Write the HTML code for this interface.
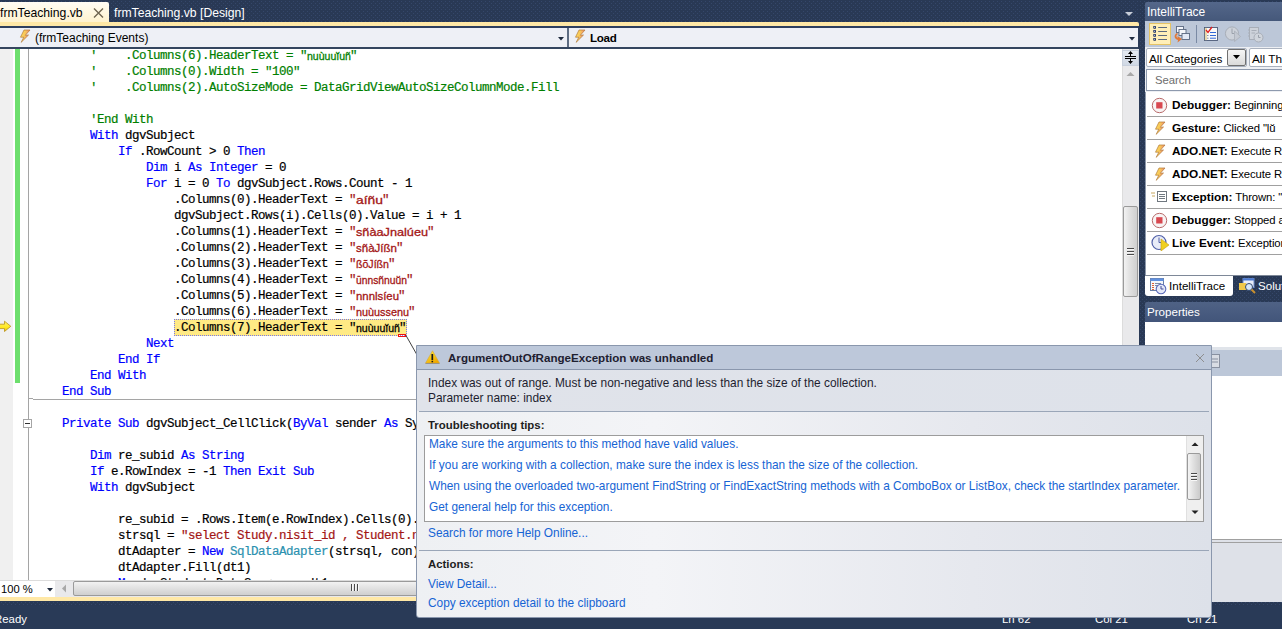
<!DOCTYPE html>
<html><head><meta charset="utf-8">
<style>
*{box-sizing:border-box}
html,body{margin:0;padding:0}
body{width:1282px;height:629px;overflow:hidden;position:relative;background:#2B3B58;font-family:"Liberation Sans",sans-serif;font-size:12px;color:#000}
.a{position:absolute}
.navy{background-color:#293955;background-image:radial-gradient(circle at 1.5px 1.5px,#35476A 0.6px,transparent 1px),radial-gradient(circle at 3.5px 3.5px,#35476A 0.6px,transparent 1px);background-size:4px 4px}
.t{position:absolute;white-space:nowrap;line-height:16px}
#code{position:absolute;left:34px;top:48px;width:1088px;height:532px;overflow:hidden}
.ln{position:absolute;left:0;height:16px;line-height:16px;white-space:pre;font-family:"Liberation Mono",monospace;font-size:12.5px;letter-spacing:-0.5px;color:#000;-webkit-text-stroke:0.2px currentColor}
.k{color:#0000FF}.c{color:#008000}.s{color:#A31515}.ty{color:#2B91AF}
.th{display:inline-block;overflow:visible;white-space:nowrap;font-family:"Liberation Sans",sans-serif;font-size:11.5px;vertical-align:top;letter-spacing:0;-webkit-text-stroke:0.3px currentColor}
</style></head><body>
<svg width="0" height="0" style="position:absolute"><defs><linearGradient id="bg" x1="0" y1="0" x2="1" y2="0.3"><stop offset="0" stop-color="#FFE060"/><stop offset="0.5" stop-color="#F8C858"/><stop offset="1" stop-color="#F07878"/></linearGradient></defs></svg>
<!-- top tab strip -->
<div class="a navy" style="left:0;top:0;width:1145px;height:22px"></div>
<div class="a" style="left:0;top:2px;width:109px;height:20px;background:linear-gradient(#FFFCF4,#FFF3CF);border-top-right-radius:2px"></div>
<div class="t" style="left:0;top:5px;font-size:12.2px;color:#000">frmTeaching.vb</div>
<svg class="a" style="left:93px;top:8px" width="11" height="10" viewBox="0 0 11 10"><path d="M1 0.5 L10 9.5 M10 0.5 L1 9.5" stroke="#6F6550" stroke-width="1.4"/></svg>
<div class="t" style="left:114px;top:5px;font-size:12.2px;color:#fff">frmTeaching.vb [Design]</div>
<svg class="a" style="left:1125px;top:12px" width="9" height="5"><path d="M0 0 H8 L4 4 Z" fill="#C8CED8"/></svg>
<div class="a" style="left:0;top:22px;width:1139px;height:4px;background:#FFE8A6;border-top-right-radius:2px"></div>
<div class="a" style="left:0;top:26px;width:1138px;height:2px;background:#2E3F5E"></div>
<!-- nav bar -->
<div class="a" style="left:0;top:28px;width:1138px;height:19px;background:#EEF0F6"></div>
<div class="a" style="left:0;top:47px;width:1138px;height:2px;background:#34455F"></div>
<div class="a" style="left:567px;top:28px;width:2px;height:19px;background:#5D6C82"></div>
<svg class="a" style="left:19px;top:29px" width="12" height="14" viewBox="0 0 12 14"><path d="M5 1 L11 1 L6.3 6.3 L9.5 6 L2.2 13.3 L4.8 8.2 L1.5 8.2 Z" fill="url(#bg)" stroke="#B07838" stroke-width="0.7"/></svg>
<div class="t" style="left:35px;top:30px;font-size:12px">(frmTeaching Events)</div>
<svg class="a" style="left:558px;top:37px" width="7" height="4"><path d="M0 0 H6 L3 3.5 Z" fill="#1F2B3F"/></svg>
<svg class="a" style="left:574px;top:29px" width="12" height="14" viewBox="0 0 12 14"><path d="M5 1 L11 1 L6.3 6.3 L9.5 6 L2.2 13.3 L4.8 8.2 L1.5 8.2 Z" fill="url(#bg)" stroke="#B07838" stroke-width="0.7"/></svg>
<div class="t" style="left:590px;top:30px;font-size:11.6px;font-weight:bold;letter-spacing:-0.3px">Load</div>
<svg class="a" style="left:1129px;top:37px" width="7" height="4"><path d="M0 0 H6 L3 3.5 Z" fill="#1F2B3F"/></svg>
<!-- editor -->
<div class="a" style="left:0;top:49px;width:1122px;height:531px;background:#fff"></div>
<div class="a" style="left:0;top:49px;width:13px;height:531px;background:#F0F0F0"></div>
<div class="a" style="left:15px;top:49px;width:5px;height:334px;background:#6DDF6D"></div>
<div class="a" style="left:28px;top:49px;width:1px;height:531px;background:#A5A5A5"></div>
<div class="a" style="left:29px;top:398px;width:4px;height:1px;background:#A5A5A5"></div>
<div class="a" style="left:33px;top:399px;width:1089px;height:1px;background:#A5A5A5"></div>
<div class="a" style="left:23px;top:419px;width:9px;height:9px;border:1px solid #A5A5A5;background:#fff"></div>
<div class="a" style="left:25px;top:423px;width:5px;height:1px;background:#333"></div>
<div class="a" style="left:174px;top:319px;width:233px;height:17px;background:#FFEA84;border:1px dotted #7878F0"></div>
<div class="a" style="left:398px;top:334px;width:8px;height:3px;background:#F01010"></div>
<div class="a" style="left:399px;top:335px;width:6px;height:1px;background-image:linear-gradient(90deg,#fff 50%,#9090F0 50%);background-size:2px 1px"></div>
<svg class="a" style="left:0;top:320px" width="12" height="13" viewBox="0 0 12 13"><defs><linearGradient id="ag" x1="0" y1="0" x2="0" y2="1"><stop offset="0" stop-color="#FFF26A"/><stop offset="0.6" stop-color="#FFE820"/><stop offset="1" stop-color="#E8C010"/></linearGradient></defs><path d="M-1 4.2 H4.5 V1.2 L10.8 6.3 L4.5 11.5 V8.6 H-1 Z" fill="url(#ag)" stroke="#B89018" stroke-width="0.8"/></svg>
<div id="code">
<div class="ln" style="top:0px">        <span class="c">&#x27;    .Columns(6).HeaderText = &quot;</span><span class="th" style="width:43px;color:#008000"><span style="display:inline-block;transform:scaleX(0.917);transform-origin:0 0">nuùuuĭuñ</span></span><span class="c">&quot;</span></div>
<div class="ln" style="top:16px">        <span class="c">&#x27;    .Columns(0).Width = &quot;100&quot;</span></div>
<div class="ln" style="top:32px">        <span class="c">&#x27;    .Columns(2).AutoSizeMode = DataGridViewAutoSizeColumnMode.Fill</span></div>
<div class="ln" style="top:64px">        <span class="c">&#x27;End With</span></div>
<div class="ln" style="top:80px">        <span class="k">With</span> dgvSubject</div>
<div class="ln" style="top:96px">            <span class="k">If</span> .RowCount &gt; 0 <span class="k">Then</span></div>
<div class="ln" style="top:112px">                <span class="k">Dim</span> i <span class="k">As</span> <span class="k">Integer</span> = 0</div>
<div class="ln" style="top:128px">                <span class="k">For</span> i = 0 <span class="k">To</span> dgvSubject.Rows.Count - 1</div>
<div class="ln" style="top:144px">                    .Columns(0).HeaderText = <span class="s">&quot;</span><span class="th" style="width:26px;color:#A31515"><span style="display:inline-block;transform:scaleX(1.206);transform-origin:0 0">aíñu</span></span><span class="s">&quot;</span></div>
<div class="ln" style="top:160px">                    dgvSubject.Rows(i).Cells(0).Value = i + 1</div>
<div class="ln" style="top:176px">                    .Columns(1).HeaderText = <span class="s">&quot;</span><span class="th" style="width:71px;color:#A31515"><span style="display:inline-block;transform:scaleX(1.104);transform-origin:0 0">sñàaJnalúeu</span></span><span class="s">&quot;</span></div>
<div class="ln" style="top:192px">                    .Columns(2).HeaderText = <span class="s">&quot;</span><span class="th" style="width:40px;color:#A31515"><span style="display:inline-block;transform:scaleX(1.002);transform-origin:0 0">sñàJíßn</span></span><span class="s">&quot;</span></div>
<div class="ln" style="top:208px">                    .Columns(3).HeaderText = <span class="s">&quot;</span><span class="th" style="width:32px;color:#A31515"><span style="display:inline-block;transform:scaleX(0.922);transform-origin:0 0">ßõJíßn</span></span><span class="s">&quot;</span></div>
<div class="ln" style="top:224px">                    .Columns(4).HeaderText = <span class="s">&quot;</span><span class="th" style="width:50px;color:#A31515"><span style="display:inline-block;transform:scaleX(0.896);transform-origin:0 0">ūnnsñnuŭn</span></span><span class="s">&quot;</span></div>
<div class="ln" style="top:240px">                    .Columns(5).HeaderText = <span class="s">&quot;</span><span class="th" style="width:42px;color:#A31515"><span style="display:inline-block;transform:scaleX(0.989);transform-origin:0 0">nnnlsíeu</span></span><span class="s">&quot;</span></div>
<div class="ln" style="top:256px">                    .Columns(6).HeaderText = <span class="s">&quot;</span><span class="th" style="width:52px;color:#A31515"><span style="display:inline-block;transform:scaleX(0.942);transform-origin:0 0">nuùussenu</span></span><span class="s">&quot;</span></div>
<div class="ln" style="top:272px">                    .Columns(7).HeaderText = &quot;<span class="th" style="width:43px;color:#000"><span style="display:inline-block;transform:scaleX(0.917);transform-origin:0 0">nuùuuĭuñ</span></span>&quot;</div>
<div class="ln" style="top:288px">                <span class="k">Next</span></div>
<div class="ln" style="top:304px">            <span class="k">End If</span></div>
<div class="ln" style="top:320px">        <span class="k">End With</span></div>
<div class="ln" style="top:336px">    <span class="k">End Sub</span></div>
<div class="ln" style="top:368px">    <span class="k">Private Sub</span> dgvSubject_CellClick(<span class="k">ByVal</span> sender <span class="k">As</span> System.Object, <span class="k">ByVal</span> e <span class="k">As</span> System.Windows.Forms.DataGridViewCellEventArgs)</div>
<div class="ln" style="top:400px">        <span class="k">Dim</span> re_subid <span class="k">As</span> <span class="k">String</span></div>
<div class="ln" style="top:416px">        <span class="k">If</span> e.RowIndex = -1 <span class="k">Then Exit Sub</span></div>
<div class="ln" style="top:432px">        <span class="k">With</span> dgvSubject</div>
<div class="ln" style="top:464px">            re_subid = .Rows.Item(e.RowIndex).Cells(0).Value</div>
<div class="ln" style="top:480px">            strsql = <span class="s">&quot;select Study.nisit_id , Student.nisit_name from Study&quot;</span></div>
<div class="ln" style="top:496px">            dtAdapter = <span class="k">New</span> <span class="ty">SqlDataAdapter</span>(strsql, con)</div>
<div class="ln" style="top:512px">            dtAdapter.Fill(dt1)</div>
<div class="ln" style="top:528px">            <span class="k">Me</span>.dgvStudent.DataSource = dt1</div>
</div>

<!-- code highlight (current statement) -->
<!--HL-->
<!-- vertical scrollbar -->
<div class="a" style="left:1122px;top:49px;width:17px;height:531px;background:#E9E9EB;border-left:1px solid #DCDCDC"></div>
<div class="a" style="left:1122px;top:50px;width:17px;height:16px;background:linear-gradient(#E4E9F0,#D0D8E4);border:1px solid #C8D0DC"></div>
<svg class="a" style="left:1123px;top:50px" width="16" height="16" viewBox="0 0 16 16"><path d="M2 6.5 H13 M2 8.5 H13" stroke="#000" stroke-width="1"/><path d="M7.5 1 L5 4 H10 Z M7.5 14 L5 11 H10 Z" fill="#000"/><path d="M7.5 4 V6 M7.5 9 V11" stroke="#000" stroke-width="1"/></svg>
<svg class="a" style="left:1126px;top:71px" width="9" height="6"><path d="M0.5 5 L4.5 1 L8.5 5 Z" fill="#A8A8A8"/></svg>
<div class="a" style="left:1123px;top:206px;width:15px;height:91px;border:1px solid #9A9A9A;border-radius:2px;background:linear-gradient(90deg,#F2F2F2,#E2E2E2 40%,#CFCFCF)"></div>
<div class="a" style="left:1127px;top:248px;width:7px;height:1px;background:#4A4A4A;box-shadow:0 1px 0 #F8F8F8,0 3px 0 #4A4A4A,0 4px 0 #F8F8F8,0 6px 0 #4A4A4A,0 7px 0 #F8F8F8"></div>
<!-- horizontal scrollbar row -->
<div class="a" style="left:0;top:580px;width:1122px;height:17px;background:#E9E9EB;border-top:1px solid #DCDCDC"></div>
<div class="a" style="left:0;top:581px;width:55px;height:16px;background:#fff"></div>
<div class="t" style="left:1px;top:581px;font-size:11.2px">100 %</div>
<svg class="a" style="left:47px;top:588px" width="7" height="4"><path d="M0 0 H6 L3 3.5 Z" fill="#1F2B3F"/></svg>
<svg class="a" style="left:61px;top:584px" width="6" height="9"><path d="M5 0.5 L1 4.5 L5 8.5 Z" fill="#A8A8A8"/></svg>
<div class="a" style="left:73px;top:581px;width:1049px;height:15px;border:1px solid #9A9A9A;border-radius:2px;background:linear-gradient(#F2F2F2,#E2E2E2 45%,#CFCFCF)"></div>
<div class="a" style="left:351px;top:584px;width:1px;height:7px;background:#4A4A4A;box-shadow:1px 0 0 #F8F8F8,3px 0 0 #4A4A4A,4px 0 0 #F8F8F8,6px 0 0 #4A4A4A,7px 0 0 #F8F8F8"></div>
<div class="a" style="left:0;top:597px;width:1139px;height:4px;background:#FFE8A6"></div>
<!-- status bar -->
<div class="a navy" style="left:0;top:601px;width:1282px;height:28px"></div>
<div class="a" style="left:0;top:606px;width:1282px;height:23px;background:#293A57"></div>
<div class="t" style="left:-6px;top:611px;font-size:11.4px;color:#fff">Ready</div>
<div class="t" style="left:1002px;top:611px;font-size:11.4px;color:#fff">Ln 62</div>
<div class="t" style="left:1095px;top:611px;font-size:11.4px;color:#fff">Col 21</div>
<div class="t" style="left:1187px;top:611px;font-size:11.4px;color:#fff">Ch 21</div>
<!-- right panel -->
<div class="a navy" style="left:1139px;top:0;width:143px;height:601px"></div>
<div class="a" style="left:1145px;top:2px;width:137px;height:19px;background:linear-gradient(#54678A,#45587A);border-radius:2px 0 0 0"></div>
<div class="t" style="left:1147px;top:4px;font-size:12px;color:#fff">IntelliTrace</div>
<div class="a" style="left:1145px;top:21px;width:137px;height:26px;background:#BCC7D8"></div>
<div class="a" style="left:1149px;top:23px;width:22px;height:22px;background:#FFEFB8;border:1px solid #E5C365"></div>
<svg class="a" style="left:1150px;top:24px" width="20" height="20" viewBox="0 0 20 20"><g fill="#1E3060"><rect x="3.3" y="2" width="2.7" height="2.7" rx="0.6"/><rect x="3.3" y="6" width="2.7" height="2.7" rx="0.6"/><rect x="3.3" y="10" width="2.7" height="2.7" rx="0.6"/><rect x="3.3" y="14" width="2.7" height="2.7" rx="0.6"/></g><g fill="#D8E4F4"><rect x="4.1" y="2.8" width="1" height="1"/><rect x="4.1" y="6.8" width="1" height="1"/><rect x="4.1" y="10.8" width="1" height="1"/><rect x="4.1" y="14.8" width="1" height="1"/></g><path d="M8.2 3.5 H17 M8.2 7.5 H17 M8.2 11.5 H17 M8.2 15.5 H17" stroke="#4A5A78" stroke-width="0.9"/></svg>
<svg class="a" style="left:1173px;top:24px" width="18" height="20" viewBox="0 0 18 20"><rect x="3.5" y="2.5" width="7" height="6" fill="#F4F6FA" stroke="#5A6880" stroke-width="0.9"/><rect x="6" y="5.5" width="7" height="6" fill="#F4F6FA" stroke="#5A6880" stroke-width="0.9"/><rect x="9" y="9.5" width="7.5" height="6" fill="#E4EAF6" stroke="#5A6880" stroke-width="0.9"/><path d="M4 9 C0.5 11 1 15 5 16 L4.5 18.5 L9 15 L4.5 12 L4.8 14 C2.8 13 3 11 5 10 Z" fill="#E07838"/></svg>
<div class="a" style="left:1196px;top:25px;width:1px;height:18px;background:#7A8AA4"></div>
<svg class="a" style="left:1203px;top:26px" width="16" height="16" viewBox="0 0 16 16"><rect x="1.5" y="1.5" width="13" height="13" fill="#F8F8F8" stroke="#4A5A78" stroke-width="0.9"/><rect x="1.9" y="1.9" width="2" height="12.2" fill="#E8D8A8"/><path d="M3 4 L5 6.5 L9 1" stroke="#E02020" stroke-width="1.3" fill="none"/><path d="M7 6.5 H13 M7 9.5 H13 M7 12.2 H13" stroke="#3068D8" stroke-width="1"/><path d="M4 9.5 H5.5 M4 12.2 H5.5" stroke="#8A96B0" stroke-width="1"/></svg>
<svg class="a" style="left:1224px;top:25px" width="18" height="18" viewBox="0 0 18 18"><circle cx="8" cy="8.5" r="6.6" fill="#CDD2DA" stroke="#A8AEB8" stroke-width="1"/><path d="M8 3.5 V8.5 H10" stroke="#9AA0AA" fill="none"/><path d="M10.5 6 L16.5 11.5 L10.5 16.5 Z" fill="#C4C9D2" stroke="#A8AEB8" stroke-width="0.8"/></svg>
<svg class="a" style="left:1247px;top:26px" width="17" height="17" viewBox="0 0 17 17"><rect x="2.5" y="1.5" width="9" height="12" fill="#CDD2DA" stroke="#A8AEB8"/><path d="M1 4 H3 M1 7 H3 M1 10 H3" stroke="#A8AEB8"/><path d="M4.5 4.5 H9.5 M4.5 7 H8" stroke="#A8AEB8"/><circle cx="11.5" cy="11.5" r="4.5" fill="#D0D5DC" stroke="#A8AEB8"/><path d="M11.5 9 V11.5 H13.5" stroke="#9AA0AA" fill="none"/></svg>
<div class="a" style="left:1145px;top:47px;width:137px;height:45px;background:#EDEFF3"></div>
<div class="a" style="left:1146px;top:48px;width:101px;height:19px;background:#fff;border:1px solid #A9B1BE;border-radius:2px"></div>
<div class="t" style="left:1149px;top:51px;font-size:11.8px">All Categories</div>
<div class="a" style="left:1227px;top:49px;width:19px;height:17px;background:linear-gradient(#F6F6F6,#DADADA);border:1px solid #707070;border-radius:2px"></div>
<svg class="a" style="left:1233px;top:55px" width="8" height="5"><path d="M0 0 H7 L3.5 4 Z" fill="#000"/></svg>
<div class="a" style="left:1249px;top:48px;width:40px;height:19px;background:#fff;border:1px solid #A9B1BE;border-radius:2px"></div>
<div class="t" style="left:1252px;top:51px;font-size:11.8px">All Th</div>
<div class="a" style="left:1146px;top:69px;width:140px;height:22px;background:#fff;border:1px solid #8E9AAE"></div>
<div class="t" style="left:1155px;top:72px;font-size:11.3px;color:#6D6D6D">Search</div>
<div class="a" style="left:1145px;top:92px;width:137px;height:183px;background:#fff"></div>
<svg class="a" style="left:1151px;top:97px" width="17" height="17" viewBox="0 0 17 17"><circle cx="8.5" cy="8.5" r="7.2" fill="#F8F4F4" stroke="#B86A6A" stroke-width="1"/><rect x="5.2" y="5.2" width="6.3" height="6.3" fill="#D84850"/></svg>
<div class="t" style="left:1172px;top:97px;font-size:11.3px;letter-spacing:-0.1px"><b style="font-size:11.8px;letter-spacing:0">Debugger:</b> Beginning</div>
<div class="a" style="left:1147px;top:116px;width:135px;height:1px;background:#A0A0A0"></div>
<svg class="a" style="left:1154px;top:121px" width="12" height="14" viewBox="0 0 12 14"><path d="M5 1 L11 1 L6.3 6.3 L9.5 6 L2.2 13.3 L4.8 8.2 L1.5 8.2 Z" fill="url(#bg)" stroke="#B07838" stroke-width="0.7"/></svg>
<div class="t" style="left:1172px;top:120px;font-size:11.3px;letter-spacing:-0.1px"><b style="font-size:11.8px;letter-spacing:0">Gesture:</b> Clicked "lŭ</div>
<div class="a" style="left:1147px;top:139px;width:135px;height:1px;background:#A0A0A0"></div>
<svg class="a" style="left:1154px;top:144px" width="12" height="14" viewBox="0 0 12 14"><path d="M5 1 L11 1 L6.3 6.3 L9.5 6 L2.2 13.3 L4.8 8.2 L1.5 8.2 Z" fill="url(#bg)" stroke="#B07838" stroke-width="0.7"/></svg>
<div class="t" style="left:1172px;top:143px;font-size:11.3px;letter-spacing:-0.1px"><b style="font-size:11.8px;letter-spacing:0">ADO.NET:</b> Execute Re</div>
<div class="a" style="left:1147px;top:162px;width:135px;height:1px;background:#A0A0A0"></div>
<svg class="a" style="left:1154px;top:167px" width="12" height="14" viewBox="0 0 12 14"><path d="M5 1 L11 1 L6.3 6.3 L9.5 6 L2.2 13.3 L4.8 8.2 L1.5 8.2 Z" fill="url(#bg)" stroke="#B07838" stroke-width="0.7"/></svg>
<div class="t" style="left:1172px;top:166px;font-size:11.3px;letter-spacing:-0.1px"><b style="font-size:11.8px;letter-spacing:0">ADO.NET:</b> Execute Re</div>
<div class="a" style="left:1147px;top:185px;width:135px;height:1px;background:#A0A0A0"></div>
<svg class="a" style="left:1151px;top:188px" width="17" height="17" viewBox="0 0 17 17"><path d="M0 5 H4 M1 8 H4" stroke="#C8A860"/><rect x="6.5" y="3.5" width="9" height="10" fill="#fff" stroke="#707880"/><path d="M8 6.5 H14 M8 8.5 H14 M8 10.5 H14" stroke="#707880"/></svg>
<div class="t" style="left:1172px;top:189px;font-size:11.3px;letter-spacing:-0.1px"><b style="font-size:11.8px;letter-spacing:0">Exception:</b> Thrown: "</div>
<div class="a" style="left:1147px;top:208px;width:135px;height:1px;background:#A0A0A0"></div>
<svg class="a" style="left:1151px;top:212px" width="17" height="17" viewBox="0 0 17 17"><circle cx="8.5" cy="8.5" r="7.2" fill="#F8F4F4" stroke="#B86A6A" stroke-width="1"/><rect x="5.2" y="5.2" width="6.3" height="6.3" fill="#D84850"/></svg>
<div class="t" style="left:1172px;top:212px;font-size:11.3px;letter-spacing:-0.1px"><b style="font-size:11.8px;letter-spacing:0">Debugger:</b> Stopped at</div>
<div class="a" style="left:1147px;top:231px;width:135px;height:1px;background:#A0A0A0"></div>
<svg class="a" style="left:1151px;top:234px" width="19" height="17" viewBox="0 0 19 17"><circle cx="8" cy="8.5" r="7" fill="#E8ECF8" stroke="#5060A8" stroke-width="1.2"/><path d="M8 3.5 V8.5 H11" stroke="#5060A8" fill="none"/><path d="M10 5 L18 11 L10 17 Z" fill="#F0D020" stroke="#C8A010" stroke-width="0.6"/></svg>
<div class="t" style="left:1172px;top:235px;font-size:11.3px;letter-spacing:-0.1px"><b style="font-size:11.8px;letter-spacing:0">Live Event:</b> Exception</div>
<div class="a" style="left:1147px;top:254px;width:135px;height:1px;background:#A0A0A0"></div>
<div class="a" style="left:1145px;top:92px;width:1px;height:183px;background:#8E9AAC"></div>
<div class="a" style="left:1145px;top:275px;width:137px;height:1px;background:#7E8898"></div>
<div class="a" style="left:1145px;top:276px;width:88px;height:20px;background:#fff;border-radius:0 0 3px 3px"></div>
<svg class="a" style="left:1149px;top:277px" width="18" height="18" viewBox="0 0 18 18"><rect x="1.5" y="1.5" width="13" height="12" fill="#F4F6FA" stroke="#6A80A8"/><rect x="1.5" y="1.5" width="13" height="2.5" fill="#6090E0"/><path d="M3 6.5 H5 M3 8.5 H5 M3 10.5 H5 M3 12.5 H5" stroke="#E06030"/><path d="M6 6.5 H12 M6 8.5 H10" stroke="#7A8AA8"/><circle cx="12" cy="12" r="4.8" fill="#E4E8F8" stroke="#5868B8" stroke-width="1.1"/><path d="M12 9 V12 H14.5" stroke="#404890" fill="none"/></svg>
<div class="t" style="left:1169px;top:278px;font-size:11.6px">IntelliTrace</div>
<svg class="a" style="left:1238px;top:277px" width="18" height="18" viewBox="0 0 18 18"><rect x="5" y="1.5" width="11" height="9" fill="#E8EEF8" stroke="#6A8AC8"/><rect x="5" y="1.5" width="11" height="2" fill="#4A78D0"/><path d="M1 6 H8 L9 8 H12 V13 H1 Z" fill="#F0C848"/><circle cx="11" cy="10" r="3.5" fill="#D8E8F8" stroke="#304870"/><path d="M13.5 12.5 L17 16" stroke="#C89030" stroke-width="2"/></svg>
<div class="t" style="left:1258px;top:278px;font-size:11.6px;color:#fff">Solution</div>
<div class="a" style="left:1145px;top:302px;width:137px;height:20px;background:linear-gradient(#4F6285,#42557A);border-radius:2px 0 0 0"></div>
<div class="t" style="left:1147px;top:304px;font-size:11.6px;color:#fff">Properties</div>
<div class="a" style="left:1145px;top:322px;width:137px;height:279px;background:#fff"></div>
<div class="a" style="left:1145px;top:347px;width:137px;height:3px;background:#E0E4EA"></div>
<div class="a" style="left:1145px;top:350px;width:137px;height:26px;background:#BCC7D8"></div>
<svg class="a" style="left:1209px;top:353px" width="12" height="16" viewBox="0 0 12 16"><rect x="1.5" y="1.5" width="9" height="13" fill="#D8DCE4" stroke="#8890A0"/><path d="M3 6 H9 M3 9 H9" stroke="#8890A0"/></svg>
<div class="a" style="left:1145px;top:539px;width:137px;height:1px;background:#A0A0A0"></div>
<div class="a" style="left:1145px;top:540px;width:137px;height:2px;background:#DEE1E8"></div>
<div class="a" style="left:1145px;top:542px;width:137px;height:1px;background:#A0A0A0"></div>
<div class="a" style="left:1145px;top:543px;width:137px;height:59px;background:#DEE1E8"></div>

<!-- popup -->
<svg class="a" style="left:400px;top:330px" width="20" height="30"><path d="M6 5.5 L16.5 24" stroke="#404040" stroke-width="1"/></svg>
<div class="a" style="left:416px;top:345px;width:796px;height:273px;border:1px solid #8A97AD;border-radius:0 0 3px 3px;background:linear-gradient(90deg,#EEF0F3 0%,#F3F4F7 30%,#E6E8EE 70%,#DDE1E9 100%)"></div>
<div class="a" style="left:417px;top:346px;width:794px;height:24px;background:#BDC8DA;border-bottom:1px solid #8A97AD"></div>
<svg class="a" style="left:425px;top:350px" width="15" height="14" viewBox="0 0 15 14"><defs><linearGradient id="wg" x1="0" y1="0" x2="0.6" y2="1"><stop offset="0" stop-color="#FFF040"/><stop offset="1" stop-color="#F0A800"/></linearGradient></defs><path d="M7.5 0.8 L14.5 13.2 H0.5 Z" fill="url(#wg)" stroke="#D8A830" stroke-width="0.6"/><path d="M0.5 13.5 H14.5" stroke="#8A8A8A" stroke-width="0.8"/><path d="M7.3 4 V10" stroke="#1A1A1A" stroke-width="1.7"/><rect x="6.5" y="10.8" width="1.6" height="1.5" fill="#1A1A1A"/></svg>
<div class="t" style="left:448px;top:350px;font-size:11.6px;font-weight:bold;color:#1E2030">ArgumentOutOfRangeException was unhandled</div>
<svg class="a" style="left:1195px;top:353px" width="10" height="10"><path d="M1 1 L9 9 M9 1 L1 9" stroke="#8E8E8E" stroke-width="1"/></svg>
<div class="a" style="left:417px;top:370px;width:794px;height:41px;background:linear-gradient(90deg,#E0E3EA,#DEE2EA)"></div>
<div class="t" style="left:428px;top:375px;font-size:11.9px;color:#1E1E30">Index was out of range. Must be non-negative and less than the size of the collection.</div>
<div class="t" style="left:428px;top:390px;font-size:11.9px;color:#1E1E30">Parameter name: index</div>
<div class="a" style="left:419px;top:411px;width:790px;height:1px;background:#9AA6B8"></div>
<div class="t" style="left:428px;top:417px;font-size:11.4px;font-weight:bold;color:#1E1E1E">Troubleshooting tips:</div>
<div class="a" style="left:424px;top:435px;width:780px;height:87px;background:#fff;border:1px solid #9C9C9C"></div>
<div class="t" style="left:429px;top:436px;font-size:11.85px;color:#1664D4">Make sure the arguments to this method have valid values.</div>
<div class="t" style="left:429px;top:457px;font-size:11.85px;color:#1664D4">If you are working with a collection, make sure the index is less than the size of the collection.</div>
<div class="t" style="left:429px;top:478px;font-size:11.85px;color:#1664D4">When using the overloaded two-argument FindString or FindExactString methods with a ComboBox or ListBox, check the startIndex parameter.</div>
<div class="t" style="left:429px;top:499px;font-size:11.85px;color:#1664D4">Get general help for this exception.</div>
<div class="a" style="left:1186px;top:436px;width:17px;height:85px;background:#EFEFEF;border-left:1px solid #E0E0E0"></div>
<svg class="a" style="left:1191px;top:442px" width="8" height="5"><path d="M0.5 4 L4 0.5 L7.5 4 Z" fill="#222"/></svg>
<div class="a" style="left:1187px;top:453px;width:14px;height:47px;border:1px solid #9A9A9A;border-radius:2px;background:linear-gradient(90deg,#F4F4F4,#E0E0E0 45%,#CACACA)"></div>
<div class="a" style="left:1191px;top:473px;width:6px;height:1px;background:#4A4A4A;box-shadow:0 1px 0 #F8F8F8,0 3px 0 #4A4A4A,0 4px 0 #F8F8F8,0 6px 0 #4A4A4A,0 7px 0 #F8F8F8"></div>
<svg class="a" style="left:1191px;top:510px" width="8" height="5"><path d="M0.5 0.5 H7.5 L4 4 Z" fill="#222"/></svg>
<div class="t" style="left:428px;top:525px;font-size:11.85px;color:#1664D4">Search for more Help Online...</div>
<div class="a" style="left:419px;top:550px;width:790px;height:1px;background:#9AA6B8"></div>
<div class="t" style="left:428px;top:556px;font-size:11.4px;font-weight:bold;color:#1E1E1E">Actions:</div>
<div class="t" style="left:428px;top:576px;font-size:11.85px;color:#1664D4">View Detail...</div>
<div class="t" style="left:428px;top:595px;font-size:11.85px;color:#1664D4">Copy exception detail to the clipboard</div>

</body></html>
